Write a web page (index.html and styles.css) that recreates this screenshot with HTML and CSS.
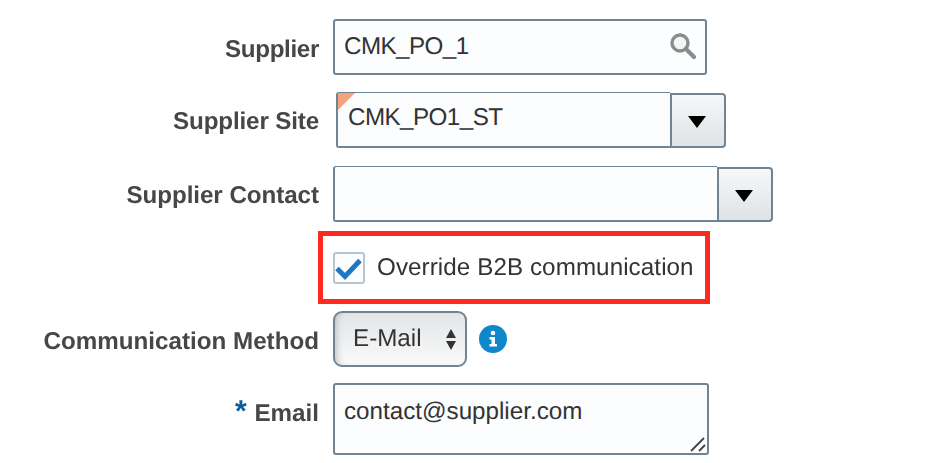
FILE: index.html
```html
<!DOCTYPE html>
<html lang="en">
<head>
<meta charset="utf-8">
<title>Supplier form</title>
<link rel="stylesheet" href="styles.css">
</head>
<body>
<form class="form">
  <div class="row row-supplier">
    <label class="label">Supplier</label>
    <div class="field input input-supplier">
      <span class="value code">CMK_PO_1</span>
      <svg class="search" width="28" height="28" viewBox="0 0 28 28"><circle cx="11" cy="11" r="8" fill="#f4f5f5" stroke="#8a8c8c" stroke-width="3.4"/><path d="M17 17 L25 25" stroke="#8a8c8c" stroke-width="4.2" stroke-linecap="round"/></svg>
    </div>
  </div>
  <div class="row row-site">
    <label class="label">Supplier Site</label>
    <div class="combo combo-site">
      <div class="field input combo-input site-input">
        <span class="changed"></span>
        <span class="value code">CMK_PO1_ST</span>
      </div>
      <div class="combo-btn"><span class="arrow"></span></div>
    </div>
  </div>
  <div class="row row-contact">
    <label class="label">Supplier Contact</label>
    <div class="combo">
      <div class="field input combo-input contact-input"></div>
      <div class="combo-btn"><span class="arrow"></span></div>
    </div>
  </div>
  <div class="row row-check">
    <div class="spacer"></div>
    <div class="highlight">
      <span class="checkbox">
        <svg width="32" height="32" viewBox="0 0 32 32"><path d="M4 16.5 L12 24.5 L27 8.5" fill="none" stroke="#1a78c9" stroke-width="5"/></svg>
      </span>
      <span class="check-text">Override B2B communication</span>
    </div>
  </div>
  <div class="row row-method">
    <label class="label">Communication Method</label>
    <div class="select">
      <span class="value">E-Mail</span>
      <span class="updown"><span class="up"></span><span class="down"></span></span>
    </div>
    <svg class="info" width="28" height="28" viewBox="0 0 28 28"><circle cx="14" cy="14" r="14" fill="#0f87cd"/><circle cx="14" cy="8" r="2.3" fill="#fff"/><path d="M10.5 12 H16 V19 H18 V21.5 H10.5 V19 H12.5 V14.5 H10.5 Z" fill="#fff"/></svg>
  </div>
  <div class="row row-email">
    <label class="label"><span class="req">*</span> Email</label>
    <div class="field textarea">
      <span class="value">contact@supplier.com</span>
      <svg class="grip" width="16" height="16" viewBox="0 0 16 16"><path d="M1 15 L14 2 M9 15 L15 9" stroke="#444" stroke-width="1.8"/></svg>
    </div>
  </div>
</form>
</body>
</html>
```
FILE: styles.css
```css
html, body {
  margin: 0;
  padding: 0;
  background: #fff;
}
body {
  width: 943px;
  height: 463px;
  overflow: hidden;
  font-family: "Liberation Sans", Arial, sans-serif;
  color: #333;
  font-size: 24.2px;
  text-rendering: geometricPrecision;
}
.form {
  display: flex;
  flex-direction: column;
  padding-top: 19px;
  filter: blur(0.3px);
}
.row {
  display: flex;
  align-items: center;
  gap: 14px;
}
.label, .spacer {
  flex: 0 0 319px;
  width: 319px;
  text-align: right;
  font-weight: 700;
  color: #474747;
}
.field {
  box-sizing: border-box;
  background: #fcfdff;
  border: 2px solid #6f8494;
  border-radius: 3px;
  position: relative;
}
.input {
  height: 56px;
  display: flex;
  align-items: center;
  padding-left: 9px;
}
.code { letter-spacing: -0.55px; }
.row-supplier { height: 56px; }
.row-supplier .label { padding-top: 6px; letter-spacing: -0.35px; }
.input-supplier { width: 374px; justify-content: space-between; padding-right: 8px; }
.search { margin-bottom: 2px; }
.row-site { height: 57px; margin-top: 16px; }
.row-site .label { padding-top: 5px; letter-spacing: -0.15px; }
.row-contact { height: 57px; margin-top: 17px; }
.row-contact .label { padding-top: 4px; letter-spacing: -0.06px; }
.combo { display: flex; align-items: flex-end; }
.combo-site { margin-left: 3px; }
.combo-input {
  border-right: 0;
  border-top-width: 1px;
  border-radius: 3px 0 0 3px;
}
.site-input { width: 334px; padding-left: 10px; }
.contact-input { width: 384px; }
.site-input .value { margin-bottom: 2px; }
.combo-btn {
  box-sizing: border-box;
  width: 56px;
  height: 55px;
  border: 2px solid #6f8494;
  border-radius: 0 4px 4px 0;
  background: linear-gradient(#f6f7f8, #dfe3e5);
  display: flex;
  align-items: center;
  justify-content: center;
}
.arrow {
  width: 0;
  height: 0;
  border-left: 9px solid transparent;
  border-right: 9px solid transparent;
  border-top: 12px solid #000;
  margin: 4px 3px 0 0;
}
.changed {
  position: absolute;
  left: 0;
  top: 0;
  width: 0;
  height: 0;
  border-top: 17px solid #f6a27c;
  border-right: 17px solid transparent;
}
.row-check { height: 73px; margin-top: 9px; gap: 0; }
.spacer { flex-basis: 318px; width: 318px; }
.highlight {
  box-sizing: border-box;
  width: 392px;
  height: 73px;
  border: 5px solid #fe2a20;
  display: flex;
  align-items: center;
  padding-left: 10px;
  gap: 12px;
}
.checkbox {
  box-sizing: border-box;
  width: 32px;
  height: 32px;
  border: 2px solid #b9c6d0;
  border-radius: 3px;
  background: #fcfdff;
  display: flex;
  align-items: center;
  justify-content: center;
  flex: none;
}
.checkbox svg { flex: none; }
.check-text { letter-spacing: 0.08px; }
.row-method { height: 56px; margin-top: 7px; }
.row-method .label { padding-top: 6px; }
.select {
  box-sizing: border-box;
  width: 134px;
  height: 56px;
  border: 2px solid #6f8494;
  border-radius: 9px;
  background: linear-gradient(#e3e5e7, #f0f1f2 60%, #fafafa);
  box-shadow: inset 6px 0 6px -4px #bfc4c7;
  display: flex;
  align-items: center;
  padding: 0 9px 0 18px;
  justify-content: space-between;
}
.updown { display: flex; flex-direction: column; gap: 3px; }
.up, .down { width: 0; height: 0; border-left: 5.5px solid transparent; border-right: 5.5px solid transparent; }
.up { border-bottom: 9px solid #333; }
.down { border-top: 9px solid #333; }
.info { margin-left: -2px; }
.row-email { height: 72px; margin-top: 16px; align-items: flex-start; }
.row-email .label { padding-top: 17px; }
.req { color: #0a5ca0; font-size: 30px; line-height: 20px; margin-right: 1px; }
.textarea {
  width: 376px;
  height: 72px;
  padding: 13px 9px;
}
.grip { position: absolute; right: 1px; bottom: 1px; }
```
